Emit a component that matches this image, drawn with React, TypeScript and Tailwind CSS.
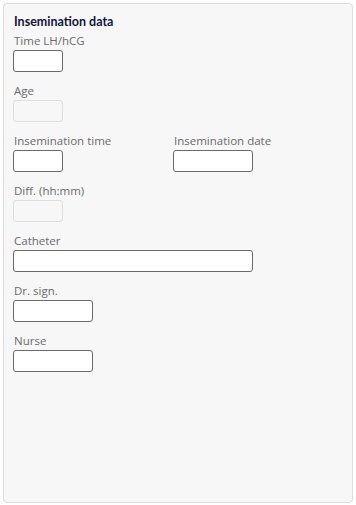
const Field = ({ label, width, disabled }: { label: string; width: string; disabled?: boolean }) => (
  <div className="mb-[10px]">
    <div className="h-[18px] pl-[1px] leading-[18px] text-[11.5px] text-[#6b6b6b] whitespace-nowrap">{label}</div>
    <div
      className={`h-[22px] ${width} rounded-[3px] border ${
        disabled ? 'border-[#dedede] bg-[#f7f7f7]' : 'border-[#6a6a6a] bg-white'
      }`}
    />
  </div>
);

export default function App() {
  return (
    <div className="h-[505px] w-[356px] p-[3px] bg-white" style={{ fontFamily: '"Open Sans", "Noto Sans", sans-serif' }}>
      <div className="h-[500px] w-[350px] rounded-[4px] border border-[#dcdcdc] bg-[#f7f7f7] pl-[9px] pt-[9px]">
        <div
          className="h-[19px] pl-[1px] leading-[17px] text-[12.5px] font-bold text-[#101540]"
          style={{ fontFamily: 'Lato, "Open Sans", sans-serif' }}
        >
          Insemination data
        </div>
        <Field label="Time LH/hCG" width="w-[50px]" />
        <Field label="Age" width="w-[50px]" disabled />
        <div className="grid grid-cols-[160px_160px]">
          <Field label="Insemination time" width="w-[50px]" />
          <Field label="Insemination date" width="w-[80px]" />
        </div>
        <Field label="Diff. (hh:mm)" width="w-[50px]" disabled />
        <Field label="Catheter" width="w-[240px]" />
        <Field label="Dr. sign." width="w-[80px]" />
        <Field label="Nurse" width="w-[80px]" />
      </div>
    </div>
  );
}
